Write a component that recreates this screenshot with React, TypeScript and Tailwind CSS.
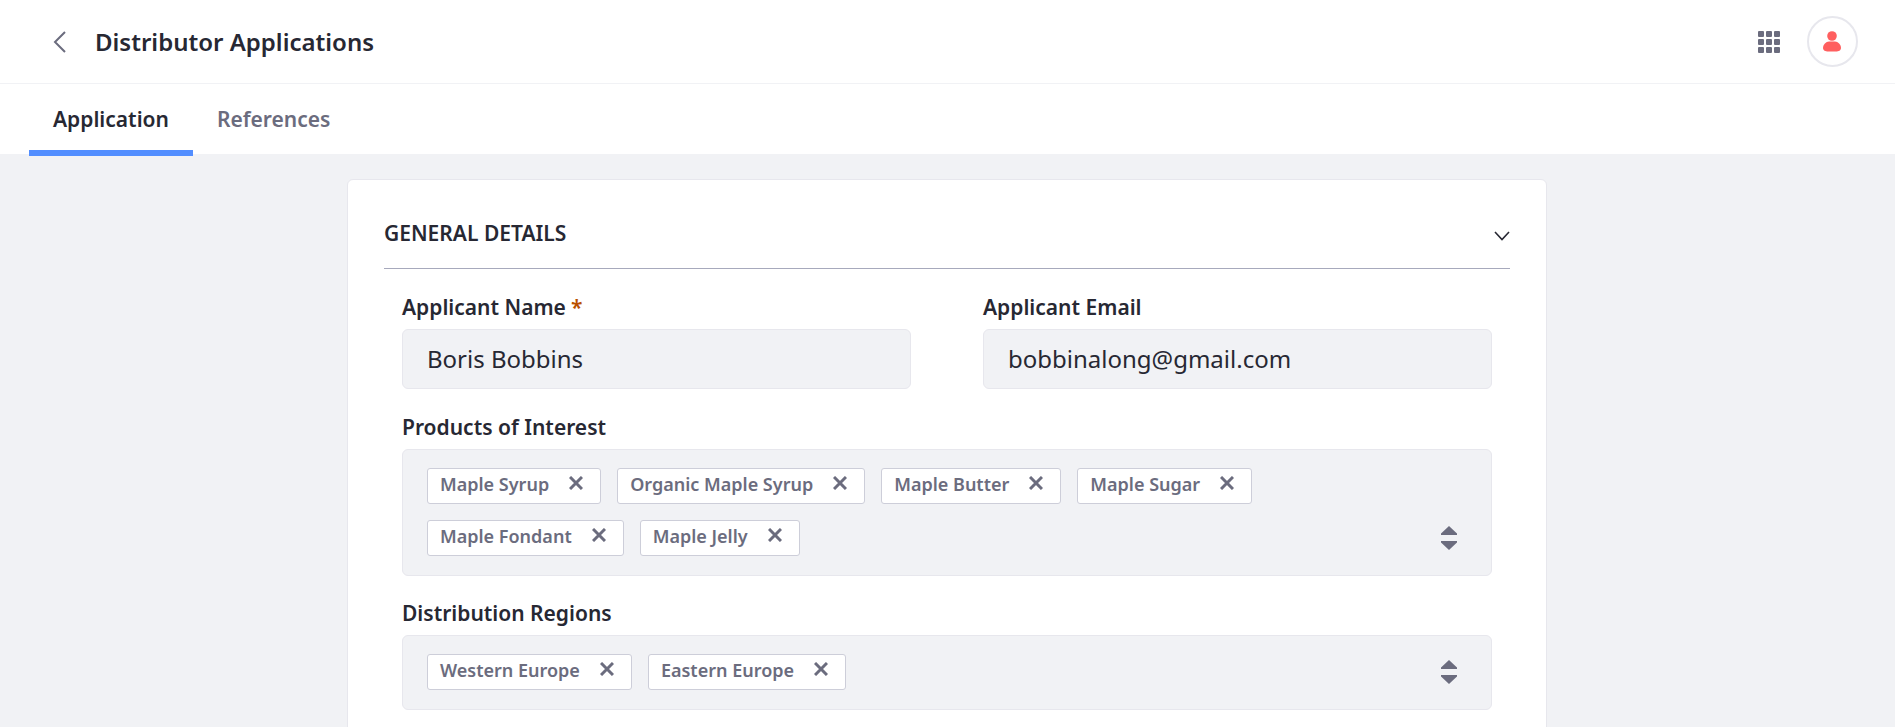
const font = { fontFamily: '"Noto Sans", sans-serif' }

const products = ["Maple Syrup", "Organic Maple Syrup", "Maple Butter", "Maple Sugar", "Maple Fondant", "Maple Jelly"]
const regions = ["Western Europe", "Eastern Europe"]

function Tag({ label }: { label: string }) {
  return (
    <div className="flex h-9 items-center rounded-[3px] border border-[#cdced9] bg-white pr-[17px] pl-[12px]">
      <span className="-mt-[4px] text-[18px] font-semibold text-[#6b6c7e]">{label}</span>
      <svg className="mb-[7px] ml-[20px]" width="14" height="14" viewBox="0 0 14 14" fill="none" stroke="#6b6c7e" strokeWidth="3">
        <path d="M1 1 13 13M13 1 1 13" />
      </svg>
    </div>
  )
}

function Stepper() {
  return (
    <svg width="16" height="24" viewBox="0 0 16 24" fill="#6b6c7e">
      <path d="M8 0 16 7.5V9H0V7.5Z" />
      <path d="M0 15H16V16.5L8 24 0 16.5Z" />
    </svg>
  )
}

function Field({ label, required, value }: { label: string; required?: boolean; value: string }) {
  return (
    <div>
      <div className="mb-2 text-[21px] leading-7 font-semibold text-[#272833]">
        {label}
        {required && <span className="ml-[5px] text-[#b95000]">*</span>}
      </div>
      <div className="flex h-[60px] items-center rounded-md border border-[#e7e7ed] bg-[#f1f2f5] px-[24px] text-[24px] text-[#272833]">
        {value}
      </div>
    </div>
  )
}

function MultiSelect({ label, items }: { label: string; items: string[] }) {
  return (
    <div>
      <div className="mb-2 text-[21px] leading-7 font-semibold text-[#272833]">{label}</div>
      <div className="flex items-end justify-between rounded-md border border-[#e7e7ed] bg-[#f1f2f5] pt-[18px] pr-[34px] pb-[19px] pl-6">
        <div className="flex w-[1000px] flex-wrap gap-4">
          {items.map((item) => (
            <Tag key={item} label={item} />
          ))}
        </div>
        <div className="mb-[6px]">
          <Stepper />
        </div>
      </div>
    </div>
  )
}

export default function App() {
  return (
    <div className="flex h-[727px] flex-col overflow-hidden bg-[#f1f2f5]" style={font}>
      <header className="flex h-[84px] shrink-0 items-center justify-between border-b border-[#f1f2f5] bg-white pr-[37px] pl-[53px]">
        <div className="flex items-center">
          <svg width="13" height="22" viewBox="0 0 13 22" fill="none" stroke="#6b6c7e" strokeWidth="2">
            <path d="M12 1 2 11 12 21" />
          </svg>
          <h1 className="ml-[29px] text-2xl font-semibold text-[#272833]">Distributor Applications</h1>
        </div>
        <div className="flex items-center gap-[27px]">
          <div className="grid grid-cols-3 gap-[2px]">
            {Array.from({ length: 9 }).map((_, i) => (
              <div key={i} className="size-[6px] rounded-[1px] bg-[#6b6c7e]" />
            ))}
          </div>
          <div className="flex size-[51px] items-center justify-center rounded-full border-2 border-[#e7e7ed] bg-white">
            <svg className="-ml-[1px]" width="18" height="21" viewBox="0 0 18 21" fill="#ff5f5f">
              <circle cx="9" cy="5" r="4.8" />
              <path d="M6 10.5H12C15 10.5 18 13.5 18 17 18 19.5 15.5 20.5 13 20.5H5C2.5 20.5 0 19.5 0 17 0 13.5 3 10.5 6 10.5Z" />
            </svg>
          </div>
        </div>
      </header>

      <nav className="flex h-[70px] shrink-0 bg-white pl-[29px]">
        <div className="z-10 flex h-[72px] items-center border-b-[6px] border-[#528eff] px-6 pt-[5px] text-[21px] font-semibold text-[#272833]">
          Application
        </div>
        <div className="flex h-[72px] items-center border-b-[6px] border-transparent px-6 pt-[5px] text-[21px] font-semibold text-[#6b6c7e]">
          References
        </div>
      </nav>

      <main className="flex flex-1 justify-center pt-[25px] pr-[1px]">
        <div className="min-h-[800px] w-[1200px] shrink-0 rounded-t-md border border-[#e7e7ed] bg-white px-9">
          <div className="flex h-[89px] items-end justify-between border-b border-[#a7a9bc] pb-[19px]">
            <h2 className="text-[21px] font-semibold text-[#272833] uppercase">General Details</h2>
            <svg className="mb-[8px]" width="16" height="10" viewBox="0 0 16 10" fill="none" stroke="#272833" strokeWidth="1.6">
              <path d="M1 1 8 8.5 15 1" />
            </svg>
          </div>
          <div className="px-[18px] pt-6">
            <div className="grid grid-cols-2 gap-[72px]">
              <Field label="Applicant Name" required value="Boris Bobbins" />
              <Field label="Applicant Email" value="bobbinalong@gmail.com" />
            </div>
            <div className="mt-6">
              <MultiSelect label="Products of Interest" items={products} />
            </div>
            <div className="mt-[23px]">
              <MultiSelect label="Distribution Regions" items={regions} />
            </div>
          </div>
        </div>
      </main>
    </div>
  )
}
